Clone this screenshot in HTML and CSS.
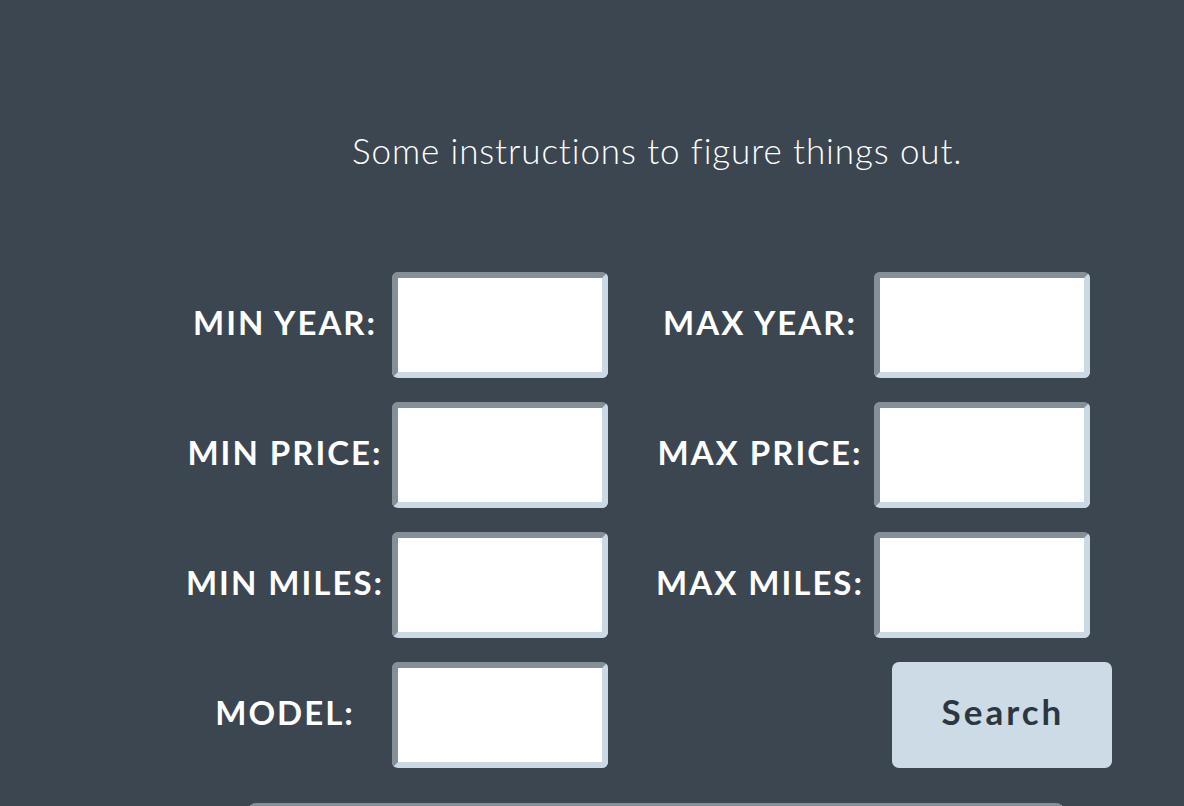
FILE: index.html
```html
<!DOCTYPE html>
<html lang="en">
<head>
<meta charset="utf-8">
<title>Search</title>
<link rel="stylesheet" href="styles.css">
</head>
<body>
<main class="page">
  <p class="intro">Some instructions to figure things out.</p>
  <form class="filters">
    <label class="lbl" for="minyear">MIN YEAR:</label>
    <input class="field" id="minyear" type="text">
    <span class="spacer"></span>
    <label class="lbl" for="maxyear">MAX YEAR:</label>
    <input class="field" id="maxyear" type="text">

    <label class="lbl" for="minprice">MIN PRICE:</label>
    <input class="field" id="minprice" type="text">
    <span class="spacer"></span>
    <label class="lbl" for="maxprice">MAX PRICE:</label>
    <input class="field" id="maxprice" type="text">

    <label class="lbl" for="minmiles">MIN MILES:</label>
    <input class="field" id="minmiles" type="text">
    <span class="spacer"></span>
    <label class="lbl" for="maxmiles">MAX MILES:</label>
    <input class="field" id="maxmiles" type="text">

    <label class="lbl" for="model">MODEL:</label>
    <input class="field" id="model" type="text">
    <span class="spacer"></span>
    <span class="spacer"></span>
    <button class="search" type="button">Search</button>
  </form>
  <div class="results"></div>
</main>
</body>
</html>
```

FILE: styles.css
```css
html, body {
  margin: 0;
  padding: 0;
  background: #3b4651;
  height: 100%;
  overflow: hidden;
}
.page {
  font-family: Lato, "Noto Sans", sans-serif;
  color: #ffffff;
  padding-top: 126px;
}
.intro {
  margin: 0 0 0 352px;
  font-size: 35px;
  font-weight: 300;
  line-height: 48px;
  letter-spacing: 0.9px;
  white-space: nowrap;
}
.filters {
  display: grid;
  grid-template-columns: 214px 216px 38px 228px 216px;
  grid-auto-rows: 106px;
  row-gap: 24px;
  margin: 98px 0 0 178px;
  align-items: center;
}
.lbl {
  text-align: center;
  font-size: 33px;
  font-weight: 700;
  letter-spacing: 2px;
  white-space: nowrap;
  padding-bottom: 6px;
}
.field {
  box-sizing: border-box;
  width: 216px;
  height: 106px;
  margin: 0;
  background: #ffffff;
  border: 6px solid;
  border-color: #858f98 #cbd9e5 #cbd9e5 #858f98;
  border-radius: 6px;
  outline: none;
  font: inherit;
}
.search {
  box-sizing: border-box;
  width: 220px;
  height: 106px;
  margin-left: 18px;
  background: #cddbe7;
  color: #2c3640;
  border: 0;
  border-radius: 7px;
  font-family: Lato, "Noto Sans", sans-serif;
  font-size: 35px;
  font-weight: 700;
  letter-spacing: 3px;
  padding: 0 0 8px 2px;
}
.results {
  box-sizing: border-box;
  width: 816px;
  height: 120px;
  margin: 35px 0 0 248px;
  background: #ffffff;
  border: 6px solid;
  border-color: #858f98 #cbd9e5 #cbd9e5 #858f98;
  border-radius: 8px;
}
```
